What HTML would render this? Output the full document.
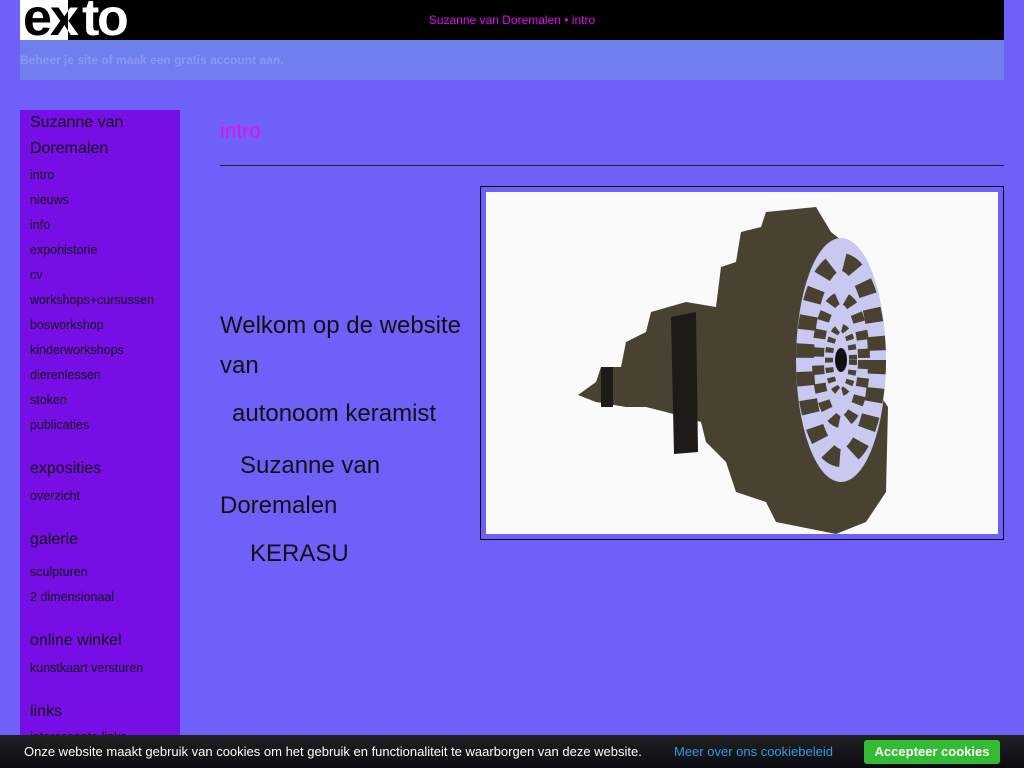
<!DOCTYPE html>
<html><head><meta charset="utf-8"><style>
body{margin:0;background:#7060fa;font-family:"Liberation Sans",sans-serif;width:1024px;height:768px;overflow:hidden;position:relative}
.top{position:absolute;left:20px;top:0;width:984px;height:40px;background:#000}
.logo{position:absolute;left:20px;top:0;width:108px;height:40px;background:#000;overflow:hidden;isolation:isolate}
.logo .w{position:absolute;left:0;top:0;width:48px;height:40px;background:#fff}
.logo i{position:absolute;top:-8px;font:bold 52px/52px "Liberation Sans",sans-serif;font-style:normal;color:#fff;mix-blend-mode:difference}
.ttl{position:absolute;left:0;width:1024px;top:13px;text-align:center;color:#e010f0;font-size:12px}
.ban{position:absolute;left:20px;top:40px;width:984px;height:40px;background:#6f7fee;color:#8a97f7;font-size:12px;font-weight:bold;line-height:40px}
.side{position:absolute;left:20px;top:110px;width:160px;height:640px;background:#770ee6;color:#111}
.side div{position:absolute;left:10px;font-size:12.5px}
.side .h{font-size:16px}
h1{position:absolute;left:220px;top:120px;margin:0;font-weight:normal;color:#e010f0;font-size:21px}
.hr{position:absolute;left:220px;top:165px;width:784px;height:1px;background:#222}
.txt{position:absolute;font-size:24px;color:#111;font-family:"Liberation Sans",sans-serif}
.img{position:absolute;left:480px;top:186px;width:522px;height:352px;border:1px solid #000;background:#7060fa}
.ck{position:absolute;left:0;top:735px;width:1024px;height:33px;background:linear-gradient(#222,#0a0a12);color:#fff;font-size:13px}
.btn{position:absolute;left:864px;top:5px;width:136px;height:24px;background:#33bb33;border-radius:3px;font-weight:bold;text-align:center;line-height:24px;font-size:13px}
</style></head><body>
<div class="top"></div>
<div class="logo"><div class="w"></div>
<i style="left:3px">e</i>
<i style="left:30px">x</i>
<i style="left:62px">t</i>
<i style="left:77px">o</i>
</div>
<div class="ttl">Suzanne van Doremalen • intro</div>
<div class="ban">Beheer je site of maak een gratis account aan.</div>
<div class="side">
<div class="h" style="top:0px;line-height:26px">Suzanne van<br>Doremalen</div>
<div style="top:58px">intro</div><div style="top:83px">nieuws</div><div style="top:108px">info</div>
<div style="top:133px">expohistorie</div><div style="top:158px">cv</div><div style="top:183px">workshops+cursussen</div>
<div style="top:208px">bosworkshop</div><div style="top:233px">kinderworkshops</div><div style="top:258px">dierenlessen</div>
<div style="top:283px">stoken</div><div style="top:308px">publicaties</div>
<div class="h" style="top:350px">exposities</div><div style="top:379px">overzicht</div>
<div class="h" style="top:421px">galerie</div><div style="top:455px">sculpturen</div><div style="top:480px">2 dimensionaal</div>
<div class="h" style="top:522px">online winkel</div><div style="top:551px">kunstkaart versturen</div>
<div class="h" style="top:593px">links</div><div style="top:620px">interessante links</div>
</div>
<h1>intro</h1><div class="hr"></div>
<div class="txt" style="left:220px;top:306px;line-height:40px">Welkom op de website<br>van</div>
<div class="txt" style="left:232px;top:400px">autonoom keramist</div>
<div class="txt" style="left:220px;top:446px;line-height:40px">&nbsp; &nbsp;Suzanne van<br>Doremalen</div>
<div class="txt" style="left:250px;top:540px">KERASU</div>
<div class="img"><svg width="512" height="342" style="position:absolute;left:5px;top:5px">
<rect width="512" height="342" fill="#fbfafa"/>
<g fill="#4a4230">
<polygon points="92,203 110,190 115,175 135,175 140,150 160,140 165,120 200,110 230,115 235,75 250,70 255,40 275,35 280,20 330,15 345,40 370,60 380,100 395,135 392,200 402,215 400,300 380,330 350,342 290,330 280,310 250,300 240,270 220,250 215,230 180,220 160,215 140,215 110,210"/>
</g>
<g fill="#1e1a18"><path d="M185,125 L210,120 L212,260 L188,262 Z"/><rect x="115" y="175" width="12" height="40"/></g>
<ellipse cx="355" cy="168" rx="45" ry="122" fill="#c8c8f0"/>
<ellipse cx="355" cy="168" rx="36" ry="98" fill="none" stroke="#4a4230" stroke-width="18" stroke-dasharray="14 14"/>
<ellipse cx="355" cy="168" rx="23" ry="62" fill="none" stroke="#4a4230" stroke-width="12" stroke-dasharray="9 9"/>
<ellipse cx="355" cy="168" rx="12" ry="32" fill="none" stroke="#4a4230" stroke-width="8" stroke-dasharray="5 5"/>
<ellipse cx="355" cy="168" rx="6" ry="12" fill="#111"/>
</svg></div>
<div class="ck"><span style="position:absolute;left:24px;top:9px">Onze website maakt gebruik van cookies om het gebruik en functionaliteit te waarborgen van deze website.</span><span style="position:absolute;left:674px;top:9px;color:#2a9fe0">Meer over ons cookiebeleid</span><div class="btn">Accepteer cookies</div></div>
</body></html>
